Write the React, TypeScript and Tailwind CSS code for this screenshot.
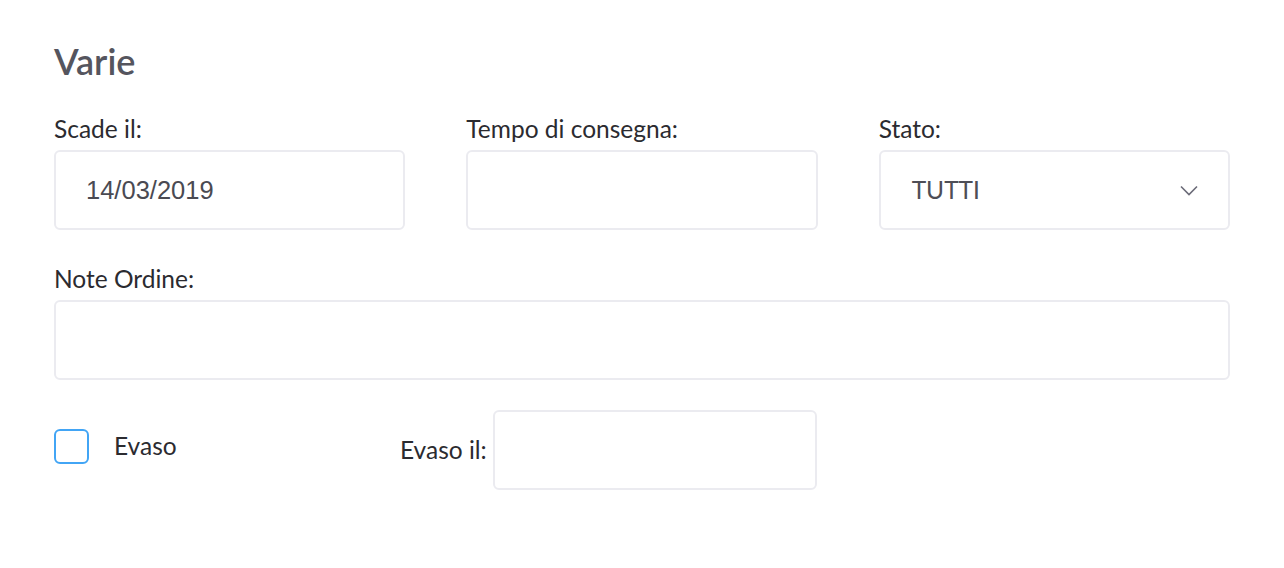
import React from 'react';

const labelCls = "block text-[24.5px] leading-[30px] text-[#2b2b30] mb-[6px]";
const inputCls = "w-full h-[80px] rounded-[6px] border-2 border-[#ebebf0] bg-white";

export default function App() {
  return (
    <div className="w-[1284px] h-[568px] bg-white px-[54px] pt-[38px]" style={{ fontFamily: 'Lato, "Noto Sans", sans-serif' }}>
      <h2 className="text-[36px] leading-[46px] font-semibold text-[#55555e] mb-[30px]">Varie</h2>

      <div className="grid grid-cols-3 gap-x-[61px]">
        <div>
          <label className={labelCls}>Scade il:</label>
          <div className={`${inputCls} flex items-center pl-[30px]`}>
            <span className="text-[25.5px] text-[#4a4a52]" style={{ fontFamily: '"Liberation Sans", Arial, sans-serif' }}>14/03/2019</span>
          </div>
        </div>
        <div>
          <label className={labelCls}>Tempo di consegna:</label>
          <div className={inputCls} />
        </div>
        <div>
          <label className={labelCls}>Stato:</label>
          <div className={`${inputCls} flex items-center justify-between pl-[31px] pr-[30px]`}>
            <span className="text-[24.5px] text-[#4e4e56]">TUTTI</span>
            <svg width="18" height="11" viewBox="0 0 18 11" fill="none">
              <path d="M1 1.5 L9 9.5 L17 1.5" stroke="#6b6b78" strokeWidth="1.6" />
            </svg>
          </div>
        </div>
      </div>

      <div className="mt-[34px]">
        <label className={labelCls}>Note Ordine:</label>
        <div className={inputCls} />
      </div>

      <div className="mt-[30px] flex items-center">
        <div className="w-[346px] flex items-center mb-[8px]">
          <div className="w-[35px] h-[35px] rounded-[6px] border-2 border-[#42a5f5] bg-white" />
          <span className="ml-[25px] text-[24.5px] text-[#2b2b30]">Evaso</span>
        </div>
        <span className="text-[24.5px] text-[#2b2b30] mr-[6px]">Evaso il:</span>
        <div className="w-[324px] h-[80px] rounded-[6px] border-2 border-[#ebebf0] bg-white" />
      </div>
    </div>
  );
}
